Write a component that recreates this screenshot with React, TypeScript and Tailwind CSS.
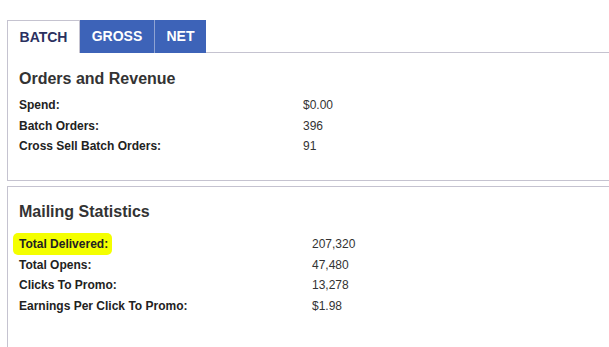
const font = { fontFamily: '"Liberation Sans", Arial, sans-serif' };

type Row = { label: string; value: string; highlight?: boolean };

const orders: Row[] = [
  { label: "Spend:", value: "$0.00" },
  { label: "Batch Orders:", value: "396" },
  { label: "Cross Sell Batch Orders:", value: "91" },
];

const mailing: Row[] = [
  { label: "Total Delivered:", value: "207,320", highlight: true },
  { label: "Total Opens:", value: "47,480" },
  { label: "Clicks To Promo:", value: "13,278" },
  { label: "Earnings Per Click To Promo:", value: "$1.98" },
];

function StatRows({ rows, labelWidth }: { rows: Row[]; labelWidth: string }) {
  return (
    <div className="flex flex-col">
      {rows.map((r) => (
        <div key={r.label} className="flex h-[20.5px] items-center text-[12px]">
          <div className={`${labelWidth} shrink-0 font-bold text-[#222]`}>
            {r.highlight ? (
              <span className="-ml-[6px] rounded-[5px] bg-[#f4ff00] py-[4px] pl-[6px] pr-[4px]">{r.label}</span>
            ) : (
              r.label
            )}
          </div>
          <div className="text-[#333]">{r.value}</div>
        </div>
      ))}
    </div>
  );
}

export default function App() {
  return (
    <div className="h-[347px] w-[609px] overflow-hidden bg-white pl-[7px] pt-[20px]" style={font}>
      {/* tabs */}
      <div className="flex h-[33px]">
        <div className="flex w-[73px] items-center justify-center border border-b-0 border-[#c5c3d0] bg-white text-[14px] font-bold text-[#2a3060]">
          BATCH
        </div>
        <div className="flex w-[74px] items-center justify-center bg-[#3d63b8] text-[14px] font-bold text-white">
          GROSS
        </div>
        <div className="w-px bg-[#8fa3d3]" />
        <div className="flex w-[51px] items-center justify-center bg-[#3d63b8] text-[14px] font-bold text-white">
          NET
        </div>
        <div className="flex-1 border-b border-[#c5c3d0]" />
      </div>

      {/* orders panel */}
      <div className="h-[128px] border-b border-l border-[#c5c3d0] pl-[11px] pt-[15px]">
        <h3 className="text-[16px] font-bold leading-[21px] text-[#333]">Orders and Revenue</h3>
        <div className="mt-[6px]">
          <StatRows rows={orders} labelWidth="w-[284px]" />
        </div>
      </div>

      {/* mailing panel */}
      <div className="mt-[5px] h-[200px] border-l border-t border-[#c5c3d0] pl-[11px] pt-[14px]">
        <h3 className="text-[16px] font-bold leading-[21px] text-[#333]">Mailing Statistics</h3>
        <div className="mt-[12px]">
          <StatRows rows={mailing} labelWidth="w-[293px]" />
        </div>
      </div>
    </div>
  );
}
